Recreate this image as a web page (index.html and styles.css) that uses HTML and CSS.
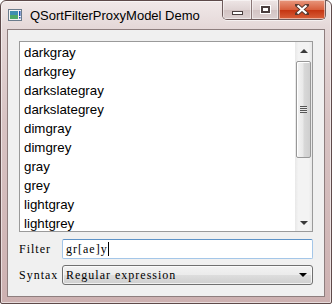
FILE: index.html
```html
<!DOCTYPE html>
<html>
<head>
  <title>QSortFilterProxyModel Demo</title>
  <link rel="stylesheet" href="styles.css">
</head>
<body>
  <div class="window">
    <div class="titlebar">
      <svg class="app-icon" width="14" height="12" viewBox="0 0 14 12">
        <rect x="0.5" y="0.5" width="13" height="11" fill="#f4f4f4" stroke="#6b7b8b"/>
        <rect x="2" y="2" width="8" height="8" fill="#3f8fb0"/>
        <rect x="2" y="6" width="8" height="4" fill="#4fa868"/>
        <rect x="11" y="2" width="1.5" height="5" fill="#1f4fb0"/>
        <rect x="11" y="8" width="1.5" height="1.5" fill="#1f4fb0"/>
      </svg>
      <span class="title">QSortFilterProxyModel Demo</span>
      <div class="caption-buttons">
        <div class="cbtn cbtn-min"><span class="min-glyph"></span></div>
        <div class="cbtn cbtn-max"><span class="max-glyph"></span></div>
        <div class="cbtn cbtn-close">
          <svg width="14" height="11" viewBox="0 0 14 11">
            <path d="M2 1 L12 10 M12 1 L2 10" stroke="#5a3a30" stroke-width="4" stroke-linecap="square"/>
            <path d="M2.5 1.5 L11.5 9.5 M11.5 1.5 L2.5 9.5" stroke="#ffffff" stroke-width="2.2"/>
          </svg>
        </div>
      </div>
    </div>

    <div class="client">
      <div class="listbox">
        <ul class="items">
          <li>darkgray</li>
          <li>darkgrey</li>
          <li>darkslategray</li>
          <li>darkslategrey</li>
          <li>dimgray</li>
          <li>dimgrey</li>
          <li>gray</li>
          <li>grey</li>
          <li>lightgray</li>
          <li>lightgrey</li>
          <li>lightslategray</li>
        </ul>
        <div class="scrollbar">
          <div class="sb-button"><span class="arrow-up"></span></div>
          <div class="sb-track">
            <div class="sb-thumb">
              <span class="grip"></span>
            </div>
          </div>
          <div class="sb-button"><span class="arrow-down"></span></div>
        </div>
      </div>

      <div class="form">
        <span class="form-label">Filter</span>
        <div class="line-edit">
          <span class="edit-text">gr[ae]y</span>
          <span class="caret"></span>
        </div>

        <span class="form-label">Syntax</span>
        <div class="combo">
          <span class="edit-text">Regular expression</span>
          <span class="combo-arrow"></span>
        </div>
      </div>
    </div>
  </div>
</body>
</html>
```

FILE: styles.css
```css
body {
  margin: 0;
  background-color: #ffffff;
}

.window {
  width: 332px;
  height: 304px;
  box-sizing: border-box;
  border: 1px solid #5e4a4a;
  border-radius: 6px 6px 2px 2px;
  background: linear-gradient(to bottom, #f1e9e9 0, #e4d7d7 28px, #d8c3c3 120px, #cdb1b1 100%);
  box-shadow: inset 0 0 0 1px rgba(255, 255, 255, 0.55);
  display: flex;
  flex-direction: column;
}

.titlebar {
  height: 28px;
  display: flex;
  align-items: flex-start;
}

.app-icon {
  margin-left: 7px;
  margin-top: 8px;
}

.title {
  margin-left: 8px;
  margin-top: 6px;
  font-family: "Liberation Sans", Arial, sans-serif;
  font-size: 13px;
  line-height: 17px;
  color: #000000;
  flex: 1;
}

.caption-buttons {
  display: flex;
  margin-right: 5px;
  margin-top: -1px;
  border: 1px solid #6f5c5c;
  border-top: none;
  border-radius: 0 0 5px 5px;
  overflow: hidden;
  box-shadow: 0 1px 0 rgba(255, 255, 255, 0.6);
}

.cbtn {
  height: 19px;
  display: flex;
  align-items: center;
  justify-content: center;
  background: linear-gradient(to bottom, #eee6e6 0, #e0d4d4 50%, #d2c2c2 51%, #dcd0d0 100%);
  box-shadow: inset 0 0 0 1px rgba(255, 255, 255, 0.5);
}

.cbtn-min {
  width: 28px;
  border-right: 1px solid #8a7777;
}

.cbtn-max {
  width: 26px;
  border-right: 1px solid #8a7777;
}

.cbtn-close {
  width: 46px;
  background: linear-gradient(to bottom, #e8987e 0, #d8603e 50%, #c4320f 51%, #d8603a 100%);
}

.min-glyph {
  width: 9px;
  height: 2px;
  margin-top: 6px;
  background-color: #ffffff;
  border: 1px solid #4a3e3e;
}

.max-glyph {
  width: 7px;
  height: 5px;
  background-color: #ffffff;
  border: 1px solid #4a3e3e;
  box-shadow: inset 0 0 0 1px #4a3e3e, 0 0 0 1px #ffffff;
}

.client {
  flex: 1;
  margin: 0 6px 6px 6px;
  border: 1px solid #8e7e7e;
  background-color: #f0f0f0;
  padding: 11px;
  display: flex;
  flex-direction: column;
}

.listbox {
  height: 191px;
  box-sizing: border-box;
  border: 1px solid #9a9a9a;
  background-color: #ffffff;
  display: flex;
  overflow: hidden;
}

.items {
  list-style: none;
  margin: 0;
  padding: 1px 0 0 4px;
  flex: 1;
  overflow: hidden;
}

.items li {
  height: 19px;
  line-height: 19px;
  font-family: "Liberation Sans", Arial, sans-serif;
  font-size: 13.3px;
  color: #000000;
  white-space: nowrap;
}

.scrollbar {
  width: 17px;
  display: flex;
  flex-direction: column;
  background: linear-gradient(to right, #e8e8e8, #f3f3f3 20%, #f3f3f3 80%, #e8e8e8);
}

.sb-button {
  height: 17px;
  display: flex;
  align-items: center;
  justify-content: center;
}

.arrow-up {
  width: 0;
  height: 0;
  border-left: 4px solid transparent;
  border-right: 4px solid transparent;
  border-bottom: 4px solid #3a3a3a;
}

.arrow-down {
  width: 0;
  height: 0;
  border-left: 4px solid transparent;
  border-right: 4px solid transparent;
  border-top: 4px solid #3a3a3a;
}

.sb-track {
  flex: 1;
  padding-top: 2px;
}

.sb-thumb {
  height: 95px;
  margin: 0 1px;
  border: 1px solid #989898;
  border-radius: 2px;
  background: linear-gradient(to right, #f4f4f4 0, #e9e9e9 45%, #d8d8d8 55%, #cfcfcf 100%);
  box-shadow: inset 1px 1px 0 #ffffff;
  display: flex;
  align-items: center;
  justify-content: center;
}

.grip {
  width: 7px;
  height: 7px;
  background: repeating-linear-gradient(to bottom, #555555 0, #555555 1px, #e8e8e8 1px, #e8e8e8 2px);
}

.form {
  margin-top: 7px;
  display: grid;
  grid-template-columns: 43px 1fr;
  row-gap: 6px;
  align-items: center;
}

.form-label,
.edit-text {
  font-family: "Liberation Serif", "Times New Roman", serif;
  font-size: 12px;
  line-height: 16px;
  letter-spacing: 1px;
  color: #000000;
  white-space: nowrap;
}

.line-edit {
  height: 20px;
  box-sizing: border-box;
  border: 1px solid #a4c6e8;
  border-top-color: #5d92c6;
  border-radius: 2px;
  background-color: #ffffff;
  padding-left: 3px;
  display: flex;
  align-items: center;
}

.caret {
  width: 1px;
  height: 14px;
  background-color: #000000;
}

.combo {
  height: 20px;
  box-sizing: border-box;
  border: 1px solid #707070;
  border-radius: 3px;
  background: linear-gradient(to bottom, #f2f2f2 0, #ebebeb 50%, #dddddd 51%, #cfcfcf 100%);
  box-shadow: inset 0 0 0 1px rgba(255, 255, 255, 0.7);
  padding: 0 5px 0 3px;
  display: flex;
  align-items: center;
  justify-content: space-between;
}

.combo-arrow {
  width: 0;
  height: 0;
  border-left: 4px solid transparent;
  border-right: 4px solid transparent;
  border-top: 4px solid #000000;
}
```
